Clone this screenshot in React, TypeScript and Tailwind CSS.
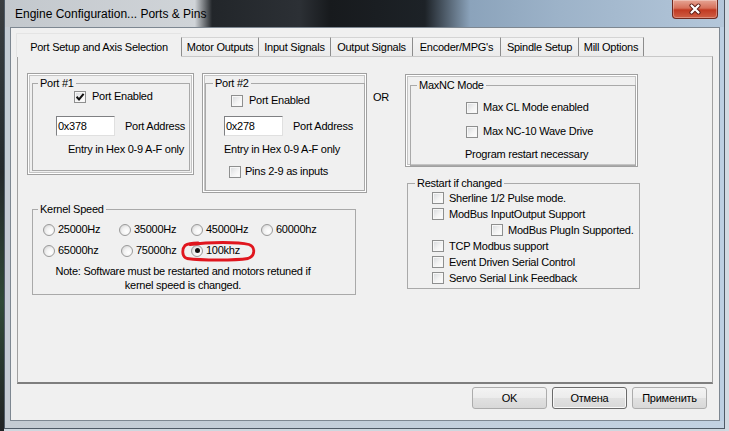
import type { ReactNode } from 'react';

function CheckBox({ checked = false }: { checked?: boolean }) {
  return (
    <span className="flex h-[12px] w-[12px] shrink-0 items-center justify-center border border-[#8e8f8f] bg-[linear-gradient(135deg,#d6d9dc_0%,#f3f3f3_55%,#ffffff_100%)] shadow-[inset_0_0_0_1px_#f7f7f7]">
      {checked ? (
        <svg width="10" height="10" viewBox="0 0 10 10">
          <path d="M1.6 4.8 L4 7.4 L8.6 1.8" fill="none" stroke="#111" strokeWidth="2" />
        </svg>
      ) : null}
    </span>
  );
}

function Radio({ checked = false }: { checked?: boolean }) {
  return (
    <span className="flex h-[12px] w-[12px] shrink-0 items-center justify-center rounded-full border border-[#9a9a9a] bg-[radial-gradient(circle_at_65%_65%,#ffffff_0%,#f2f2f2_45%,#c9c9c9_100%)]">
      {checked ? <span className="h-[5px] w-[5px] rounded-full bg-[#111]" /> : null}
    </span>
  );
}

function Group({
  label,
  className,
  legendClass,
  children,
}: {
  label: string;
  className: string;
  legendClass: string;
  children: ReactNode;
}) {
  return (
    <fieldset className={`min-w-0 border border-[#a9a9a9] ${className}`}>
      <legend className={`px-[2px] leading-[13px] ${legendClass}`}>{label}</legend>
      {children}
    </fieldset>
  );
}

function Frame({ className, children }: { className: string; children: ReactNode }) {
  return (
    <div
      className={`shrink-0 border border-[#a0a0a0] shadow-[inset_0_0_0_1px_#ffffff,inset_0_0_0_2px_#c4c4c4] ${className}`}
    >
      {children}
    </div>
  );
}

function HexField({ value }: { value: string }) {
  return (
    <div className="h-[20px] w-[59px] shrink-0 border border-[#7f8083] border-r-[#e0e0e0] border-b-[#e0e0e0] bg-white pl-[1px] leading-[18px]">
      {value}
    </div>
  );
}

const tabs = [
  { label: 'Motor Outputs', cls: 'w-[77px]' },
  { label: 'Input Signals', cls: 'w-[72px]' },
  { label: 'Output Signals', cls: 'w-[82px]' },
  { label: "Encoder/MPG's", cls: 'w-[88px]' },
  { label: 'Spindle Setup', cls: 'w-[78px]' },
  { label: 'Mill Options', cls: 'w-[66px] border-r' },
];

const restartRows = [
  { label: 'Sherline 1/2 Pulse mode.', cls: 'ml-[24px]' },
  { label: 'ModBus InputOutput Support', cls: 'ml-[24px]' },
  { label: 'ModBus PlugIn Supported.', cls: 'ml-[83px]' },
  { label: 'TCP Modbus support', cls: 'ml-[24px]' },
  { label: 'Event Driven Serial Control', cls: 'ml-[24px]' },
  { label: 'Servo Serial Link Feedback', cls: 'ml-[24px]' },
];

function TitleBar() {
  return (
    <div className="flex h-[27px] items-start bg-[linear-gradient(90deg,#c3c8cd_0%,#d0d4d8_26.4%,#22262a_28.8%,#2c3035_41%,#171a1d_45.2%,#1d2227_58.4%,#8ba3bb_64.7%,#9db3c9_77.2%,#b4c7da_100%)]">
      <div className="pl-[10px] pt-[7px] text-[12px] leading-[15px] tracking-normal">
        Engine Configuration... Ports &amp; Pins
      </div>
      <div className="flex-1" />
      <div className="mr-[6px] flex h-[19px] w-[46px] items-center justify-center rounded-b-[4px] border border-t-0 border-[#6f2a20] bg-[linear-gradient(180deg,#e6a594_0%,#d6705a_45%,#c13a22_55%,#cf5f45_100%)] shadow-[inset_0_0_0_1px_rgba(255,255,255,0.3)]">
        <svg width="14" height="12" viewBox="0 0 14 12">
          <path d="M3.5 2.5 L10.5 9.5 M10.5 2.5 L3.5 9.5" stroke="#5a1a12" strokeWidth="4" strokeLinecap="round" />
          <path d="M3.5 2.5 L10.5 9.5 M10.5 2.5 L3.5 9.5" stroke="#ffffff" strokeWidth="2.3" strokeLinecap="round" />
        </svg>
      </div>
    </div>
  );
}

function TabStrip() {
  return (
    <div className="ml-[5px] mt-[5px] flex h-[23px] items-start">
      <div className="relative z-10 flex h-[24px] w-[165px] justify-center border-t border-l border-[#e4e4e4] bg-[#f0f0f0] pt-[7px]">
        Port Setup and Axis Selection
      </div>
      {tabs.map((t) => (
        <div
          key={t.label}
          className={`mt-[4px] flex h-[19px] items-center justify-center border-l border-t border-[#8c8c8c] border-t-[#d4d4d4] bg-[linear-gradient(180deg,#f4f4f4,#ebebeb)] ${t.cls}`}
        >
          {t.label}
        </div>
      ))}
    </div>
  );
}

function Panel() {
  return (
    <div className="ml-[6px] flex h-[328px] w-[696px] items-start border border-[#a0a0a0] border-t-[#c8c8c8] border-b-2 border-b-[#7e7e7e] pl-[9px] pt-[16px]">
      <div className="flex w-[340px] shrink-0 flex-col">
        <div className="flex items-start gap-[8px]">
          <Frame className="h-[102px] w-[167px]">
            <Group label="Port #1" className="ml-[4px] mt-[3px] h-[94px] w-[158px]" legendClass="ml-[5px]">
              <div className="ml-[41px] flex items-center gap-[6px]">
                <CheckBox checked />
                <span>Port Enabled</span>
              </div>
              <div className="ml-[23px] mt-[13px] flex items-center gap-[10px]">
                <HexField value="0x378" />
                <span>Port Address</span>
              </div>
              <div className="ml-[35px] mt-[7px]">Entry in Hex 0-9 A-F only</div>
            </Group>
          </Frame>
          <Frame className="h-[120px] w-[165px]">
            <Group label="Port #2" className="ml-[2px] mt-[3px] h-[114px] w-[160px]" legendClass="ml-[7px]">
              <div className="ml-[25px] mt-[4px] flex items-center gap-[6px]">
                <CheckBox />
                <span>Port Enabled</span>
              </div>
              <div className="ml-[18px] mt-[9px] flex items-center gap-[10px]">
                <HexField value="0x278" />
                <span>Port Address</span>
              </div>
              <div className="ml-[18px] mt-[7px]">Entry in Hex 0-9 A-F only</div>
              <div className="ml-[23px] mt-[9px] flex items-center gap-[4px]">
                <CheckBox />
                <span>Pins 2-9 as inputs</span>
              </div>
            </Group>
          </Frame>
        </div>
        <Group label="Kernel Speed" className="ml-[5px] mt-[10px] h-[92px] w-[324px]" legendClass="ml-[5px]">
          <div className="ml-[10px] mt-[7px] flex items-center">
            <div className="flex w-[76px] items-center gap-[3px]">
              <Radio />
              <span>25000Hz</span>
            </div>
            <div className="flex w-[72px] items-center gap-[3px]">
              <Radio />
              <span>35000Hz</span>
            </div>
            <div className="flex w-[70px] items-center gap-[3px]">
              <Radio />
              <span>45000Hz</span>
            </div>
            <div className="flex items-center gap-[3px]">
              <Radio />
              <span>60000hz</span>
            </div>
          </div>
          <div className="ml-[10px] mt-[8px] flex items-center">
            <div className="flex w-[78px] items-center gap-[3px]">
              <Radio />
              <span>65000hz</span>
            </div>
            <div className="flex w-[70px] items-center gap-[3px]">
              <Radio />
              <span>75000hz</span>
            </div>
            <div className="relative flex items-center gap-[3px]">
              <Radio checked />
              <span>100khz</span>
              <svg
                className="absolute left-[-11px] top-[-3px]"
                width="78"
                height="21"
                viewBox="0 0 78 21"
              >
                <path
                  d="M10 3.5 C 30 0.8, 58 0.8, 69 3.5 C 75.5 6, 75.5 15, 68 17.5 C 55 19.5, 22 19.5, 7 17.5 C 1.8 16, 1.8 8, 5 4.5 C 8 2.5, 13 2, 18 2"
                  fill="none"
                  stroke="#e0161e"
                  strokeWidth="2.8"
                  strokeLinecap="round"
                />
              </svg>
            </div>
          </div>
          <div className="mt-[7px] w-[300px] text-center leading-[14px]">
            Note: Software must be restarted and motors retuned if
            <br />
            kernel speed is changed.
          </div>
        </Group>
      </div>
      <div className="ml-[6px] mt-[18px] w-[20px] shrink-0">OR</div>
      <div className="ml-[12px] mt-[1px] flex shrink-0 flex-col">
        <Frame className="h-[93px] w-[233px]">
          <Group label="MaxNC Mode" className="ml-[4px] mt-[4px] h-[87px] w-[226px]" legendClass="ml-[6px]">
            <div className="ml-[55px] mt-[9px] flex items-center gap-[5px]">
              <CheckBox />
              <span>Max CL Mode enabled</span>
            </div>
            <div className="ml-[55px] mt-[11px] flex items-center gap-[5px]">
              <CheckBox />
              <span>Max NC-10 Wave Drive</span>
            </div>
            <div className="ml-[54px] mt-[10px]">Program restart necessary</div>
          </Group>
        </Frame>
        <Group label="Restart if changed" className="ml-[2px] mt-[10px] h-[112px] w-[233px]" legendClass="ml-[7px]">
          {restartRows.map((r) => (
            <div key={r.label} className={`flex h-[16px] items-center gap-[5px] ${r.cls}`}>
              <CheckBox />
              <span>{r.label}</span>
            </div>
          ))}
        </Group>
      </div>
    </div>
  );
}

function DialogButton({ label, focused = false }: { label: string; focused?: boolean }) {
  return (
    <button
      className={`h-[22px] w-[75px] rounded-[3px] border bg-[linear-gradient(180deg,#f3f3f3_0%,#ececec_50%,#e1e1e1_51%,#d8d8d8_100%)] leading-[20px] ${
        focused ? 'border-[#6b6b6b] shadow-[inset_0_0_0_1px_#f8f8f8]' : 'border-[#acacac]'
      }`}
    >
      {label}
    </button>
  );
}

export default function App() {
  return (
    <div className="flex h-[431px] w-[729px] items-start overflow-hidden bg-[#cfd7df] font-['Liberation_Sans',Arial,sans-serif] text-[11px] leading-[13px] tracking-[-0.25px] text-black">
      <div className="h-[431px] w-[4px] shrink-0 bg-[linear-gradient(180deg,#3b3f42_0%,#24282b_40%,#2f4a36_70%,#202224_100%)]" />
      <div className="flex w-[721px] shrink-0 flex-col border-x border-b border-[#4f5a66]">
        <TitleBar />
        <div className="flex h-[394px]">
          <div className="w-[5px] bg-[#c5ccd4]" />
          <div className="flex w-[710px] flex-col border border-[#7d8791] bg-[#f0f0f0]">
            <TabStrip />
            <Panel />
            <div className="mt-[3px] flex justify-end gap-[5px] pr-[12px]">
              <DialogButton label="OK" />
              <DialogButton label="Отмена" focused />
              <DialogButton label="Применить" />
            </div>
          </div>
          <div className="w-[4px] bg-[#bccfe2]" />
        </div>
        <div className="h-[7px] bg-[linear-gradient(90deg,#c4cbd2,#c2d2e2)]" />
      </div>
      <div className="h-[431px] flex-1 bg-[#d2dae2]" />
    </div>
  );
}
